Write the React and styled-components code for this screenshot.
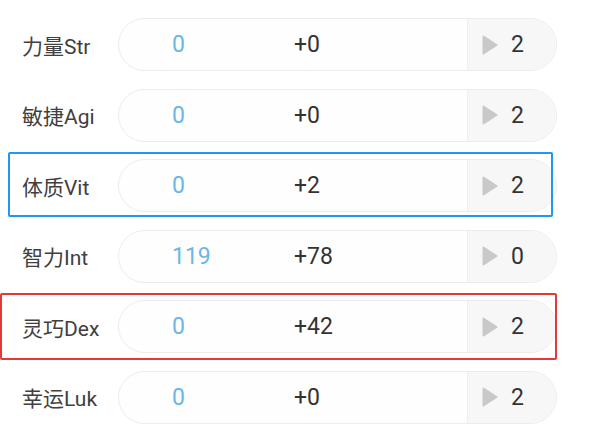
import React from 'react';
import styled, { createGlobalStyle } from 'styled-components';

const GlobalStyle = createGlobalStyle`
	html, body {
		margin: 0;
		padding: 0;
		background: #ffffff;
	}
	body {
		font-family: Roboto, "Noto Sans CJK SC", sans-serif;
		color: #333;
	}
`

const Page = styled.div`
	width: 590px;
	height: 434px;
	padding-top: 18px;
	box-sizing: border-box;
	display: flex;
	flex-direction: column;
	gap: 17.6px;
	overflow: hidden;
`

const Row = styled.div`
	position: relative;
	display: flex;
	align-items: center;
	height: 53px;
`

const Label = styled.div`
	width: 96px;
	padding-left: 22px;
	font-size: 21px;
	color: #404040;
	white-space: nowrap;
`

const Pill = styled.div`
	width: 439px;
	height: 53px;
	box-sizing: border-box;
	border: 1px solid #ececec;
	border-radius: 27px;
	overflow: hidden;
	background: #fefefe;
	display: grid;
	grid-template-columns: 175px 173px 1fr;
	align-items: stretch;
`

const Base = styled.div`
	display: flex;
	align-items: center;
	padding-left: 53px;
	font-size: 23px;
	color: #6cb6e6;
`

const Bonus = styled.div`
	display: flex;
	align-items: center;
	font-size: 23px;
	color: #333;
`

const Points = styled.div`
	display: flex;
	align-items: center;
	gap: 13px;
	padding-left: 14px;
	background: #f7f7f7;
	border-left: 1px solid #eeeeee;
	font-size: 23px;
	color: #333;
`

const Highlight = styled.div`
	position: absolute;
	left: ${p => p.left}px;
	top: -7px;
	width: ${p => p.width}px;
	height: ${p => p.height}px;
	box-sizing: border-box;
	border: 2px solid ${p => p.color};
	border-radius: 2px;
	pointer-events: none;
`

const Arrow = () => (
	<svg width="16" height="20" viewBox="0 0 16 20">
		<path d="M1.5 1.5 L14.5 10 L1.5 18.5 Z" fill="#c9c9c9" stroke="#c9c9c9" strokeWidth="2" strokeLinejoin="round" />
	</svg>
)

const stats = [
	{ label: '力量Str', base: 0, bonus: '+0', points: 2 },
	{ label: '敏捷Agi', base: 0, bonus: '+0', points: 2 },
	{ label: '体质Vit', base: 0, bonus: '+2', points: 2, mark: { color: '#2196f3', left: 8, width: 545, height: 65 } },
	{ label: '智力Int', base: 119, bonus: '+78', points: 0 },
	{ label: '灵巧Dex', base: 0, bonus: '+42', points: 2, mark: { color: '#e53935', left: 0, width: 557, height: 67 } },
	{ label: '幸运Luk', base: 0, bonus: '+0', points: 2 },
]

const App = () => {
	return (
		<>
			<GlobalStyle />
			<Page>
				{
					stats.map((s, idx) => (
						<Row key={idx}>
							<Label>{s.label}</Label>
							<Pill>
								<Base>{s.base}</Base>
								<Bonus>{s.bonus}</Bonus>
								<Points>
									<Arrow />
									<span>{s.points}</span>
								</Points>
							</Pill>
							{s.mark && <Highlight {...s.mark} />}
						</Row>
					))
				}
			</Page>
		</>
	)
}

export default App;
